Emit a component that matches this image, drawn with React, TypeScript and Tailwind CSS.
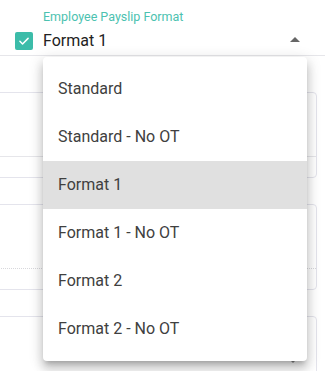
import React from "react";

const options = [
  "Standard",
  "Standard - No OT",
  "Format 1",
  "Format 1 - No OT",
  "Format 2",
  "Format 2 - No OT",
];

export default function App() {
  const selected = "Format 1";

  return (
    <div className="relative w-[325px] h-[371px] overflow-hidden bg-white font-['Roboto',sans-serif]">
      {/* Payslip format field */}
      <div className="flex items-end h-[56px] border-b border-[#e6e6ea]">
        <div className="w-[43px] pl-[15px] pb-[5px]">
          <div className="w-[18px] h-[18px] rounded-[2px] bg-[#3cbca9] flex items-center justify-center">
            <svg width="14" height="14" viewBox="0 0 24 24" fill="none">
              <path d="M5 12.5l4.5 4.5L19 7.5" stroke="white" strokeWidth="2.6" strokeLinecap="round" strokeLinejoin="round" />
            </svg>
          </div>
        </div>
        <div className="flex-1 pr-[25px] pb-[2px]">
          <div className="text-[12.5px] leading-[16px] text-[#4cc2b0] mb-[4px]">Employee Payslip Format</div>
          <div className="flex items-center justify-between h-[24px]">
            <span className="text-[16px] leading-[24px] text-[#222]">{selected}</span>
            <span className="w-0 h-0 border-l-[5px] border-r-[5px] border-b-[5px] border-l-transparent border-r-transparent border-b-[#666] mb-[3px]" />
          </div>
        </div>
      </div>

      {/* Cards behind the menu */}
      <div className="flex flex-col gap-[26px] mt-[36px] -ml-[8px] w-[325px]">
        <div className="h-[86px] border border-[#e4e4ec] rounded-[4px] flex flex-col">
          <div className="h-[64px] border-b border-[#e6e6ea]" />
        </div>
        <div className="h-[86px] border border-[#e4e4ec] rounded-[4px] flex flex-col">
          <div className="h-[64px] border-b border-dotted border-[#d8d8dc]" />
        </div>
        <div className="h-[86px] border border-[#e4e4ec] rounded-[4px] flex justify-end items-end pr-[18px] pb-[38px]">
          <span className="w-0 h-0 border-l-[5px] border-r-[5px] border-t-[5px] border-l-transparent border-r-transparent border-t-[#888]" />
        </div>
      </div>

      {/* Open dropdown menu */}
      <div className="absolute left-[43px] top-[57px] w-[264px] bg-white rounded-[4px] py-[8px] shadow-[0_5px_5px_-3px_rgba(0,0,0,0.2),0_8px_10px_1px_rgba(0,0,0,0.14),0_3px_14px_2px_rgba(0,0,0,0.12)]">
        {options.map((o) => (
          <div
            key={o}
            className={`h-[48px] px-[15px] flex items-center text-[16px] text-[#404040] ${o === selected ? "bg-[#e0e0e0]" : ""}`}
          >
            {o}
          </div>
        ))}
      </div>
    </div>
  );
}
